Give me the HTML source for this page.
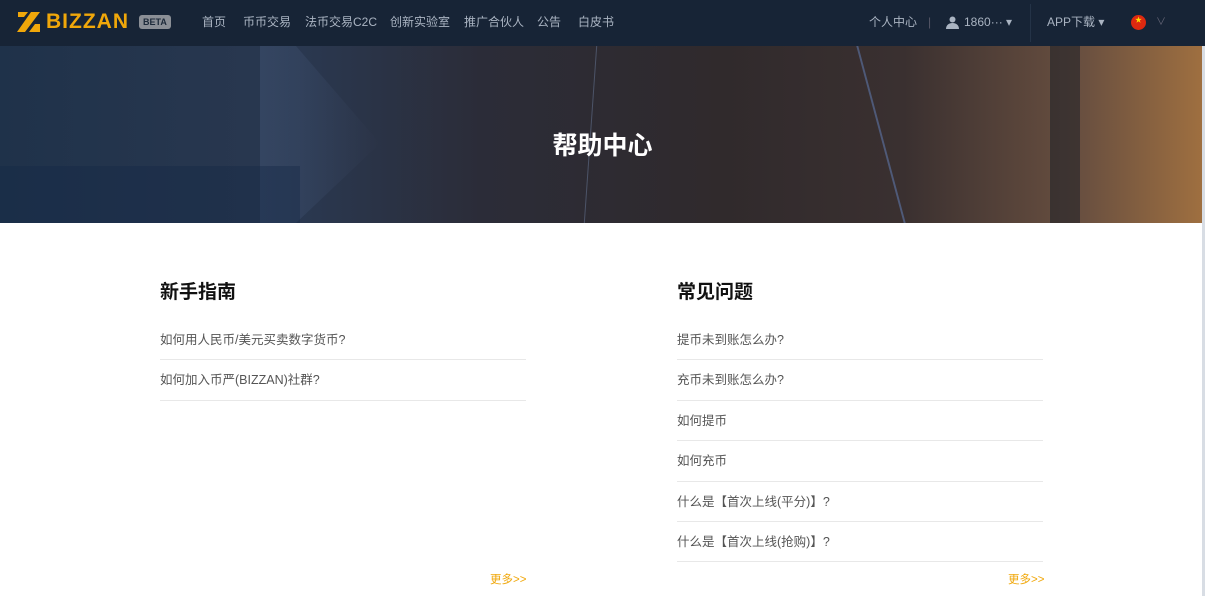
<!DOCTYPE html>
<html><head><meta charset="utf-8"><style>
*{margin:0;padding:0;box-sizing:border-box}
body{width:1205px;height:596px;overflow:hidden;background:#fff;font-family:"Liberation Sans","Noto Sans CJK SC",sans-serif;position:relative}
.nav{position:absolute;left:0;top:0;width:1205px;height:46px;background:#172436;color:#aab4c2;font-size:12px}
.nav span{position:absolute;top:16px;line-height:12px;white-space:nowrap}
.banner{position:absolute;left:0;top:46px;width:1205px;height:177px;overflow:hidden;
background:linear-gradient(90deg,#1f324a 0%,#2a3850 25%,#2b2c38 40%,#302a2c 60%,#3a3030 75%,#6a5040 90%,#a07040 100%)}
.banner .t{position:absolute;left:0;width:1205px;top:80px;text-align:center;color:#fff;font-size:25px;font-weight:bold}
h2{position:absolute;font-size:19px;font-weight:bold;color:#111;top:277px}
.list{position:absolute;top:320px;width:366px}
.list div{height:40.4px;line-height:41px;border-bottom:1px solid #e8e8e8;font-size:12.5px;color:#555}
.more{position:absolute;top:571px;font-size:11.5px;color:#f0a70a}
</style></head><body>
<div class="nav">
<svg style="position:absolute;left:17px;top:11px" width="24" height="22" viewBox="0 0 24 22"><g fill="#f0a70a"><path d="M1 1h10l-4 5H1z"/><path d="M14 1h9L8 21H0z" /><path d="M18 13h5v8h-11z"/></g></svg>
<span style="left:46px;top:11px;line-height:22px;color:#f0a70a;font-size:21px;font-weight:bold;letter-spacing:1px">BIZZAN</span>
<span style="left:139px;top:15px;background:#8b8f96;color:#1d2a3a;font-size:9px;font-weight:bold;padding:2px 4px;border-radius:3px;line-height:10px">BETA</span>
<span style="left:202px">首页</span><span style="left:243px">币币交易</span><span style="left:305px">法币交易C2C</span><span style="left:390px">创新实验室</span><span style="left:464px">推广合伙人</span><span style="left:537px">公告</span><span style="left:578px">白皮书</span>
<span style="left:869px">个人中心</span><span style="left:928px;color:#556">|</span>
<svg style="position:absolute;left:946px;top:16px" width="13" height="13" viewBox="0 0 13 13"><circle cx="6.5" cy="3.5" r="3" fill="#aab4c2"/><path d="M0 13c0-4 3-6 6.5-6s6.5 2 6.5 6z" fill="#aab4c2"/></svg>
<span style="left:964px">1860··· ▾</span>
<div style="position:absolute;left:1030px;top:4px;width:1px;height:38px;background:#243347"></div>
<span style="left:1047px">APP下载 ▾</span>
<div style="position:absolute;left:1131px;top:15px;width:15px;height:15px;border-radius:50%;background:#de2910"></div>
<span style="left:1135px;top:17px;color:#ffde00;font-size:7px;line-height:7px">★</span>
<span style="left:1156px;font-size:10px;top:17px;color:#667">∨</span>
</div>
<div class="banner">
<div style="position:absolute;left:260px;top:0;width:120px;height:177px;background:linear-gradient(90deg,rgba(120,150,200,.15),rgba(0,0,0,0));clip-path:polygon(0 0,30% 0,100% 55%,30% 100%,0 100%)"></div>
<div style="position:absolute;left:0;top:120px;width:300px;height:57px;background:rgba(20,40,70,.4)"></div>
<div style="position:absolute;left:590px;top:0;width:1px;height:177px;background:rgba(150,180,230,.3);transform:skewX(-4deg)"></div>
<div style="position:absolute;left:880px;top:0;width:2px;height:177px;background:rgba(120,170,255,.35);transform:skewX(15deg)"></div>
<div style="position:absolute;left:1050px;top:0;width:30px;height:177px;background:rgba(20,25,35,.5)"></div>
<div class="t">帮助中心</div>
</div>
<div style="position:absolute;left:1202px;top:46px;width:3px;height:550px;background:#d8dde4"></div>
<h2 style="left:160px">新手指南</h2>
<h2 style="left:677px">常见问题</h2>
<div class="list" style="left:160px"><div>如何用人民币/美元买卖数字货币?</div><div>如何加入币严(BIZZAN)社群?</div></div>
<div class="list" style="left:677px"><div>提币未到账怎么办?</div><div>充币未到账怎么办?</div><div>如何提币</div><div>如何充币</div><div>什么是【首次上线(平分)】?</div><div>什么是【首次上线(抢购)】?</div></div>
<span class="more" style="left:490px">更多&gt;&gt;</span>
<span class="more" style="left:1008px">更多&gt;&gt;</span>
</body></html>
